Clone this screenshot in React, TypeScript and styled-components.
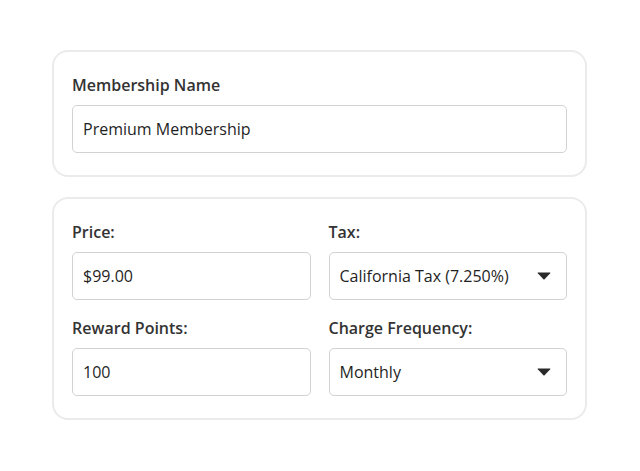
import React from "react";
import styled, { createGlobalStyle } from "styled-components";

const GlobalStyle = createGlobalStyle`
  html, body {
    margin: 0;
    padding: 0;
    background: #ffffff;
  }
  body {
    font-family: "Open Sans", "Liberation Sans", sans-serif;
    color: #2b2b2b;
  }
`;

const Page = styled.div`
  width: 640px;
  height: 471px;
  box-sizing: border-box;
  padding: 50px 53px 0 52px;
  display: flex;
  flex-direction: column;
  gap: 20px;
`;

const Card = styled.div`
  border: 2px solid #ebebeb;
  border-radius: 16px;
  padding: 23px 18px 22px 18px;
  background: #ffffff;
`;

const Grid = styled.div`
  display: grid;
  grid-template-columns: 1fr 1fr;
  column-gap: 18px;
  row-gap: 18px;
`;

const Field = styled.div`
  display: flex;
  flex-direction: column;
  gap: 10px;
`;

const Label = styled.div`
  font-size: 16px;
  line-height: 20px;
  font-weight: 600;
  color: #333333;
`;

const Box = styled.div`
  height: 48px;
  box-sizing: border-box;
  border: 1.5px solid #d2d2d2;
  border-radius: 5px;
  padding: 0 15px 0 10px;
  display: flex;
  align-items: center;
  justify-content: space-between;
  font-size: 16px;
  color: #1f1f1f;
`;

const Caret = () => (
  <svg width="14" height="8" viewBox="0 0 14 8">
    <path d="M1 0.5 H13 Q13.8 0.5 13.2 1.2 L7.6 7.3 Q7 7.9 6.4 7.3 L0.8 1.2 Q0.2 0.5 1 0.5 Z" fill="#2a2a2a" />
  </svg>
);

type InputProps = { label: string; value: string; select?: boolean };

const Input = ({ label, value, select }: InputProps) => (
  <Field>
    <Label>{label}</Label>
    <Box>
      <span>{value}</span>
      {select && <Caret />}
    </Box>
  </Field>
);

export default function App() {
  return (
    <>
      <GlobalStyle />
      <Page>
        <Card>
          <Input label="Membership Name" value="Premium Membership" />
        </Card>
        <Card>
          <Grid>
            <Input label="Price:" value="$99.00" />
            <Input label="Tax:" value="California Tax (7.250%)" select />
            <Input label="Reward Points:" value="100" />
            <Input label="Charge Frequency:" value="Monthly" select />
          </Grid>
        </Card>
      </Page>
    </>
  );
}
